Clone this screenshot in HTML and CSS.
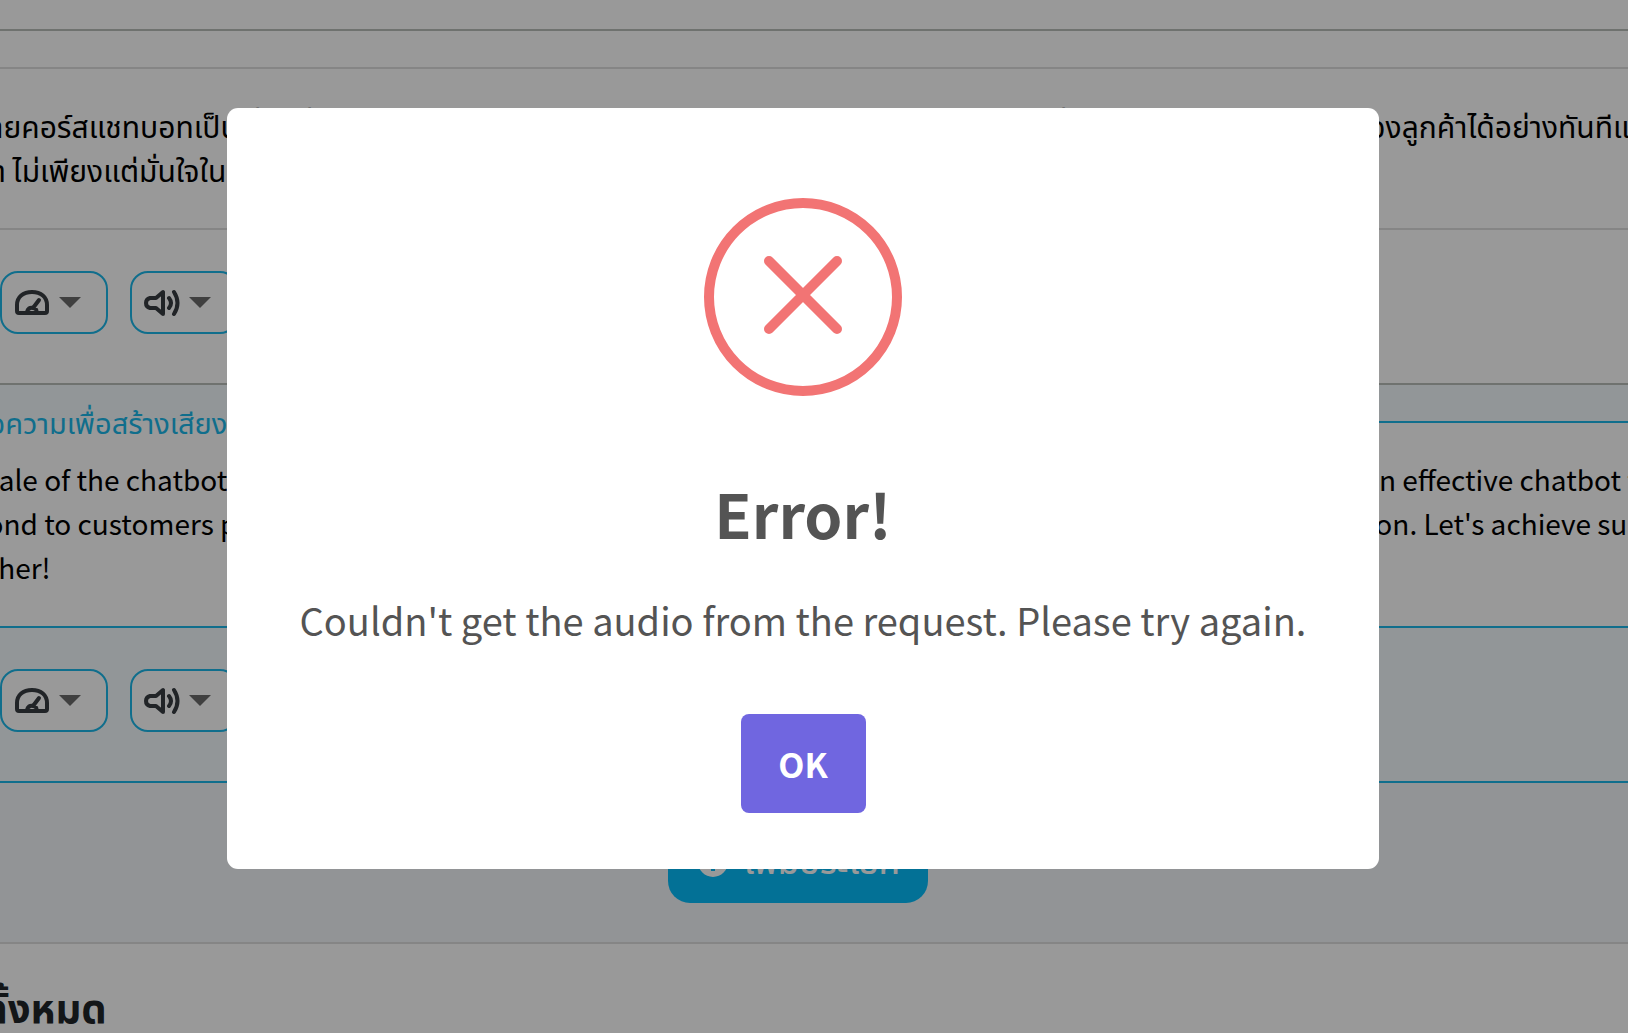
FILE: index.html
```html
<!DOCTYPE html>
<html lang="th">
<head>
    <meta charset="UTF-8">
    <meta name="viewport" content="width=device-width, initial-scale=1.0">
    <title>Text to speech</title>
    <link rel="stylesheet" href="styles.css">
</head>
<body>
<main class="page">
    <div class="topbar"></div>

    <section class="block">
        <textarea class="text thai" rows="2" aria-label="ข้อความ">การขายคอร์สแชทบอทเป็นเรื่องที่ช่วยให้คุณสร้างรายได้ สำหรับธุรกิจของคุณทุกคน ด้วยแชทบอทที่ตอบสนองความต้องการของลูกค้าได้อย่างทันทีและมีประสิทธิภาพ
มีราคา ไม่เพียงแต่มั่นใจในการขาย</textarea>
        <div class="tools">
            <button class="tool" aria-label="Speed">
                <svg class="icon" viewBox="0 0 36 28"><path d="M3 22V16C3 8 9 3 18 3s15 5 15 13v6q0 2-2 2H5q-2 0-2-2zM13 23q1-5 6-4t3 5M19 19l6-8"/></svg>
                <span class="arrow"></span>
            </button>
            <button class="tool" aria-label="Volume">
                <svg class="icon" viewBox="0 0 36 28"><path d="M19 3v22l-7-6H6q-4-1-4-5t4-5h6zM25 9q4 5 0 10M30 3q7 11 0 22"/></svg>
                <span class="arrow"></span>
            </button>
        </div>
    </section>

    <section class="block active">
        <div class="field">
            <label class="label" for="speech">ใส่ข้อความเพื่อสร้างเสียงพูด</label>
            <textarea class="text" id="speech" rows="3">The sale of the chatbot course is an opportunity to quickly build your own online business and help you create an effective chatbot that can
respond to customers promptly and answer all their own needs every day with complete confidence and precision. Let's achieve success
together!</textarea>
        </div>
        <div class="tools">
            <button class="tool" aria-label="Speed">
                <svg class="icon" viewBox="0 0 36 28"><path d="M3 22V16C3 8 9 3 18 3s15 5 15 13v6q0 2-2 2H5q-2 0-2-2zM13 23q1-5 6-4t3 5M19 19l6-8"/></svg>
                <span class="arrow"></span>
            </button>
            <button class="tool" aria-label="Volume">
                <svg class="icon" viewBox="0 0 36 28"><path d="M19 3v22l-7-6H6q-4-1-4-5t4-5h6zM25 9q4 5 0 10M30 3q7 11 0 22"/></svg>
                <span class="arrow"></span>
            </button>
        </div>
    </section>

    <div class="add-row">
        <button class="add">
            <svg class="plus" viewBox="0 0 34 34"><circle cx="17" cy="17" r="17"/><path d="M17 8v18M8 17h18"/></svg>
            เพิ่มประโยค
        </button>
    </div>

    <section class="all">
        <h2>ทั้งหมด</h2>
    </section>
</main>

<div class="overlay">
    <div class="modal" role="dialog" aria-labelledby="modal-title">
        <svg class="error-icon" viewBox="0 0 198 198"><circle cx="99" cy="99" r="94"/><path d="M65 63l68 68M133 63l-68 68"/></svg>
        <h1 id="modal-title">Error!</h1>
        <p>Couldn't get the audio from the request. Please try again.</p>
        <button class="ok">OK</button>
    </div>
</div>
</body>
</html>
```
FILE: styles.css
```css
* {
    box-sizing: border-box;
    margin: 0;
    padding: 0;
}

body {
    height: 100vh;
    overflow: hidden;
    background: #fff;
    color: #212529;
    font-family: "Noto Sans CJK JP", "Noto Sans Thai", sans-serif;
}

button {
    font-family: inherit;
    cursor: pointer;
}

/* the page is wider than the window on both sides */
.page {
    margin: 0 -100px 0 -132px;
}

.topbar {
    height: 31px;
    border-bottom: 2px solid #b9beba;
}

.block {
    padding-top: 36px;
    border-bottom: 2px solid #b9beba;
}

.text {
    display: block;
    width: 100%;
    padding: 34px 60px 37px;
    border: 2px solid #dedede;
    background: #fff;
    color: #000;
    font-family: inherit;
    font-size: 28px;
    line-height: 44px;
    white-space: pre;
    overflow: hidden;
    resize: none;
}

.thai {
    font-size: 30px;
}

.tools {
    display: flex;
    gap: 22px;
    padding: 41px 132px 49px;
}

.tool {
    display: flex;
    align-items: center;
    gap: 9px;
    width: 108px;
    height: 63px;
    padding: 0 12px;
    border: 2px solid #1cb8ea;
    border-radius: 18px;
    background: #fff;
}

.icon {
    width: 36px;
    height: 28px;
    fill: none;
    stroke: #383c42;
    stroke-width: 4;
    stroke-linejoin: round;
    stroke-linecap: round;
}

.arrow {
    border: 11px solid transparent;
    border-top-color: #6c6c6c;
    border-bottom: 0;
}

.active {
    background: #f3fbfd;
    border-color: #1cb8ea;
}

.field {
    position: relative;
}

.active .text {
    border-color: #1cb8ea;
}

.label {
    position: absolute;
    top: -22px;
    left: 70px;
    padding: 0 10px;
    background: linear-gradient(#f3fbfd 50%, #fff 50%);
    color: #1cb8ea;
    font-size: 29px;
    line-height: 44px;
}

.add-row {
    padding: 38px 0 39px;
    border-bottom: 2px solid #dedede;
    background: #f4f7fa;
    text-align: center;
}

.add {
    display: flex;
    align-items: center;
    gap: 14px;
    height: 82px;
    margin: 0 auto;
    padding: 0 28px;
    border: 0;
    border-radius: 22px;
    background: #06bdfb;
    color: #fff;
    font-size: 34px;
    font-weight: 500;
}

.plus {
    width: 34px;
    height: 34px;
    fill: #fff;
    stroke: #06bdfb;
    stroke-width: 4;
}

.all {
    padding: 28px 114px;
}

.all h2 {
    font-size: 40px;
    line-height: 68px;
}

.overlay {
    position: fixed;
    inset: 0;
    display: flex;
    justify-content: center;
    align-items: center;
    padding: 0 22px 56px 0;
    background: rgba(0, 0, 0, 0.4);
}

.modal {
    display: flex;
    flex-direction: column;
    align-items: center;
    width: 1152px;
    max-width: 100%;
    padding: 90px 20px 56px;
    border-radius: 11px;
    background: #fff;
    color: #545454;
}

.error-icon {
    width: 198px;
    height: 198px;
    fill: none;
    stroke: #f27474;
    stroke-width: 10;
    stroke-linecap: round;
}

.modal h1 {
    margin-top: 69px;
    font-size: 61px;
    font-weight: 700;
    line-height: 96px;
}

.modal p {
    margin-top: 29px;
    font-size: 38px;
    line-height: 60px;
}

.ok {
    width: 125px;
    height: 99px;
    margin-top: 64px;
    border: 0;
    border-radius: 8px;
    background: #7066e0;
    color: #fff;
    font-size: 34px;
    font-weight: 700;
}
```
